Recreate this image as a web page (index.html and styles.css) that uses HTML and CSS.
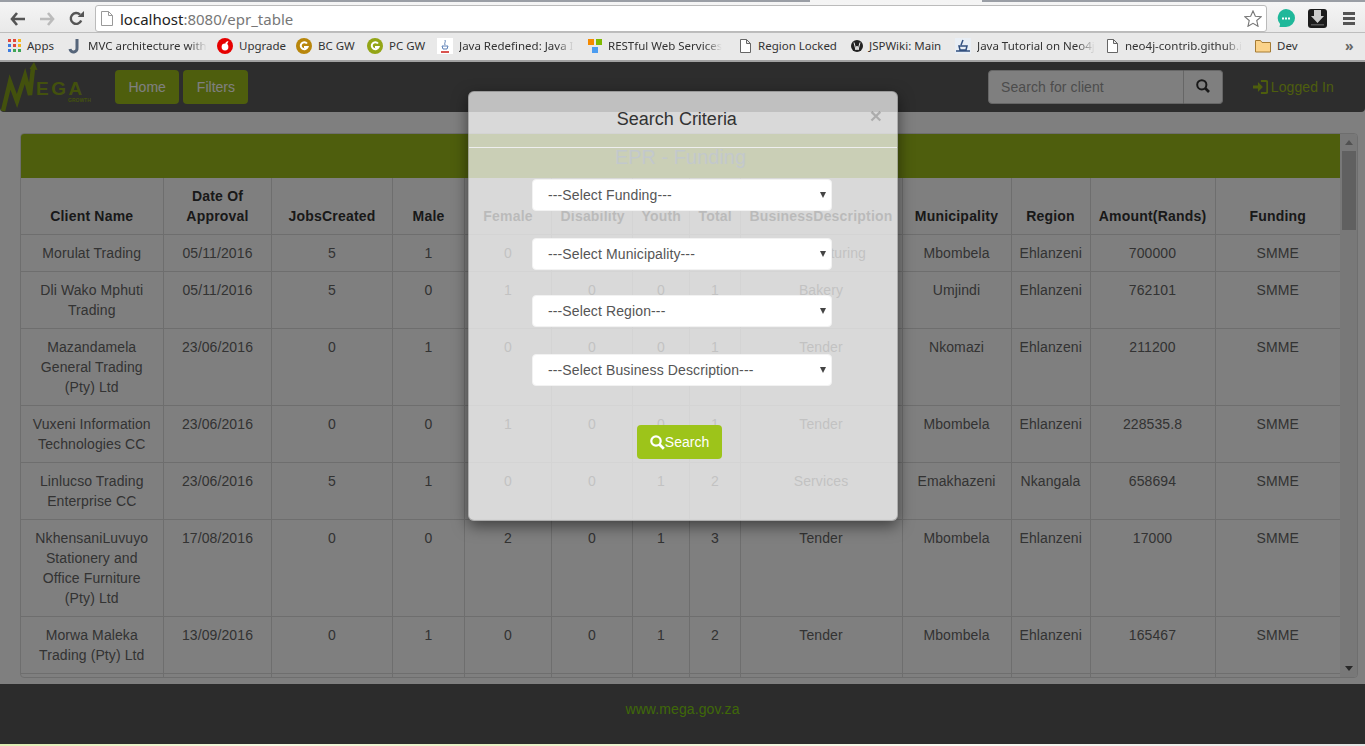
FILE: index.html
```html
<!DOCTYPE html>
<html lang="en">
<head>
    <meta charset="UTF-8">
    <title>EPR Table</title>
    <link rel="stylesheet" href="styles.css">
</head>
<body>
    <!-- browser window top -->
    <div class="tabstrip"><span></span><span class="tabstrip-active"></span><span></span></div>
    <div class="toolbar">
        <svg class="tool-back" width="16" height="14" viewBox="0 0 16 14"><path d="M7 1 2 7l5 6M2.5 7H15" fill="none" stroke="#555" stroke-width="2.6"/></svg>
        <svg class="tool-forward" width="16" height="14" viewBox="0 0 16 14"><path d="M9 1l5 6-5 6M13.5 7H1" fill="none" stroke="#bbb" stroke-width="2.6"/></svg>
        <svg class="tool-reload" width="15" height="15" viewBox="0 0 15 15"><path d="M12.2 9.5A5.4 5.4 0 1 1 11 3.6" fill="none" stroke="#555" stroke-width="2.4"/><path d="M8.6 6H15V0z" fill="#555"/></svg>
        <div class="addressbar">
            <svg width="12" height="15" viewBox="0 0 12 15"><path d="M.5.5h7l4 4v10H.5zM7.5.5v4h4" fill="#fff" stroke="#999"/></svg>
            <span class="url"><span class="url-host">localhost</span>:8080/epr_table</span>
            <svg class="star" width="18" height="17" viewBox="0 0 19 18"><path d="M9.5 1l2.5 5.6 6 .6-4.500 4 1.300 6-5.300-3.100-5.300 3.100 1.300-6L1 7.200l6-.6z" fill="#fff" stroke="#777" stroke-width="1.200"/></svg>
        </div>
        <svg class="tool-chat" width="18" height="19" viewBox="0 0 18 19"><path d="M9 0a9 9 0 0 1 0 18H2.500l.6-3A9 9 0 0 1 9 0z" fill="#1fb89a"/><path d="M5 8.500h2v2H5zM8 8.500h2v2H8zM11 8.500h2v2h-2z" fill="#fff"/></svg>
        <svg class="tool-save" width="19" height="19" viewBox="0 0 19 19"><rect width="19" height="19" rx="3" fill="#1c1c1c"/><path d="M6 1h7v6h3l-6.500 7L3 7h3z" fill="#ccc"/><path d="M3 15h13v1.500H3z" fill="#555"/></svg>
        <div class="tool-menu"><span></span><span></span><span></span></div>
    </div>
    <div class="bookmarks">
        <div class="bm">
            <svg width="13" height="13" viewBox="0 0 13 13"><path d="M0 0h3v3H0z" fill="#e0483c"/><path d="M5 0h3v3H5z" fill="#e0483c"/><path d="M10 0h3v3h-3z" fill="#f3b51c"/><path d="M0 5h3v3H0z" fill="#3d7de0"/><path d="M5 5h3v3H5z" fill="#e0483c"/><path d="M10 5h3v3h-3z" fill="#f3b51c"/><path d="M0 10h3v3H0z" fill="#3d7de0"/><path d="M5 10h3v3H5z" fill="#3fa557"/><path d="M10 10h3v3h-3z" fill="#3fa557"/></svg>
            <span>Apps</span>
        </div>
        <div class="bm">
            <svg width="14" height="16" viewBox="0 0 14 16"><path d="M9 1v9a3.500 3.500 0 0 1-7 1" fill="none" stroke="#56657a" stroke-width="3"/></svg>
            <span class="bm-fade">MVC architecture with</span>
        </div>
        <div class="bm">
            <svg width="16" height="16" viewBox="0 0 16 16"><circle cx="8" cy="8" r="8" fill="#e60000"/><circle cx="8" cy="9" r="3.400" fill="#fff"/><path d="M8 5.500c1-2 2.500-2.500 3.500-2.300-.5 1-1 2-1.500 3z" fill="#fff"/></svg>
            <span>Upgrade</span>
        </div>
        <div class="bm">
            <svg width="16" height="16" viewBox="0 0 16 16"><circle cx="8" cy="8" r="8" fill="#b8860b"/><path d="M11 5.500A3.500 3.500 0 1 0 11.500 9H8" fill="none" stroke="#fff" stroke-width="2"/></svg>
            <span>BC GW</span>
        </div>
        <div class="bm">
            <svg width="16" height="16" viewBox="0 0 16 16"><circle cx="8" cy="8" r="8" fill="#93a516"/><path d="M11 5.500A3.500 3.500 0 1 0 11.500 9H8" fill="none" stroke="#fff" stroke-width="2"/></svg>
            <span>PC GW</span>
        </div>
        <div class="bm">
            <svg width="16" height="16" viewBox="0 0 16 16"><path d="M0 0h16v16H0z" fill="#fff"/><path d="M8 2c1 2-1 3 0 5M5 8h6l-1 3H6z" fill="none" stroke="#5a7fb5"/><path d="M4 13h8v2H4z" fill="#d9534f"/></svg>
            <span class="bm-fade">Java Redefined: Java I</span>
        </div>
        <div class="bm">
            <svg width="14" height="14" viewBox="0 0 14 14"><path d="M0 0h6v6H0z" fill="#f58a00"/><path d="M8 0h6v6H8z" fill="#7fba00"/><path d="M4 8h6v6H4z" fill="#4b9cf0"/></svg>
            <span class="bm-fade">RESTful Web Services</span>
        </div>
        <div class="bm bm-doc">
            <svg width="11" height="14" viewBox="0 0 11 14"><path d="M.5.500h6l4 4v9H.5zM6.500.500v4h4" fill="#fff" stroke="#666"/></svg>
            <span>Region Locked</span>
        </div>
        <div class="bm">
            <svg width="12" height="12" viewBox="0 0 12 12"><circle cx="6" cy="6" r="6" fill="#222"/><path d="M3 2.500 5 10l1-4 1 4 2-7.500" fill="none" stroke="#eee"/></svg>
            <span>JSPWiki: Main</span>
        </div>
        <div class="bm">
            <svg width="16" height="16" viewBox="0 0 16 16"><path d="M0 0h16v16H0z" fill="#e8eef5"/><path d="M4 8h8l-1 4H5zM8 2 6 7M1 13h14" fill="none" stroke="#32507f" stroke-width="1.500"/></svg>
            <span class="bm-fade">Java Tutorial on Neo4j</span>
        </div>
        <div class="bm bm-doc">
            <svg width="11" height="14" viewBox="0 0 11 14"><path d="M.5.500h6l4 4v9H.5zM6.500.500v4h4" fill="#fff" stroke="#666"/></svg>
            <span class="bm-fade">neo4j-contrib.github.i</span>
        </div>
        <div class="bm">
            <svg width="16" height="14" viewBox="0 0 16 14"><path d="M.5 13V1.500h5l1.500 2h8.500V13z" fill="#fbd38a" stroke="#a67c35"/></svg>
            <span>Dev</span>
        </div>
        <div class="bm-more">»</div>
    </div>

    <div class="page">
        <nav class="navbar">
            <svg class="logo" width="115" height="50" viewBox="0 0 115 50">
                <path d="M3 49 10 20l7 19 8-25 5 19 3-27" fill="none" stroke="#87a31a" stroke-width="4.500"/>
                <path d="M29.500 7 34 0l3.500 8z" fill="#87a31a"/>
                <text class="logo-name" x="36" y="33">EGA</text>
                <text class="logo-small" x="68" y="40">GROWTH</text>
            </svg>
            <a class="btn btn-green">Home</a>
            <a class="btn btn-green">Filters</a>
            <form class="client-search">
                <input type="text" placeholder="Search for client">
                <button type="button">
                    <svg width="14" height="14" viewBox="0 0 14 14"><circle cx="5.800" cy="5.800" r="4.600" fill="none" stroke="#333" stroke-width="2"/><path d="M9 9l4 4" stroke="#333" stroke-width="2.600"/></svg>
                </button>
            </form>
            <a class="login">
                <svg width="15" height="14" viewBox="0 0 15 14"><path d="M0 5.500h5V2l5 5-5 5V8.500H0z" fill="#9cbc1a"/><path d="M8 1h5a1.500 1.500 0 0 1 1.500 1.500v9A1.500 1.500 0 0 1 13 13H8" fill="none" stroke="#9cbc1a" stroke-width="2"/></svg>Logged In
            </a>
        </nav>

        <main class="content">
            <div class="panel">
                <div class="panel-main">
                    <h3 class="panel-heading">EPR - Funding</h3>
                    <table>
                        <colgroup>
                            <col class="w142"><col class="w108"><col class="w121"><col class="w72"><col class="w87"><col class="w81"><col class="w57"><col class="w51"><col class="w162"><col class="w109"><col class="w79"><col class="w125"><col class="w125">
                        </colgroup>
                        <thead>
                            <tr>
                                <th>Client Name</th><th>Date Of Approval</th><th>JobsCreated</th><th>Male</th><th>Female</th><th>Disability</th><th>Youth</th><th>Total</th><th>BusinessDescription</th><th>Municipality</th><th>Region</th><th>Amount(Rands)</th><th>Funding</th>
                            </tr>
                        </thead>
                        <tbody>
                            <tr><td>Morulat Trading</td><td>05/11/2016</td><td>5</td><td>1</td><td>0</td><td>0</td><td>0</td><td>1</td><td>Manufacturing</td><td>Mbombela</td><td>Ehlanzeni</td><td>700000</td><td>SMME</td></tr>
                            <tr><td>Dli Wako Mphuti Trading</td><td>05/11/2016</td><td>5</td><td>0</td><td>1</td><td>0</td><td>0</td><td>1</td><td>Bakery</td><td>Umjindi</td><td>Ehlanzeni</td><td>762101</td><td>SMME</td></tr>
                            <tr><td>Mazandamela General Trading (Pty) Ltd</td><td>23/06/2016</td><td>0</td><td>1</td><td>0</td><td>0</td><td>0</td><td>1</td><td>Tender</td><td>Nkomazi</td><td>Ehlanzeni</td><td>211200</td><td>SMME</td></tr>
                            <tr><td>Vuxeni Information Technologies CC</td><td>23/06/2016</td><td>0</td><td>0</td><td>1</td><td>0</td><td>0</td><td>1</td><td>Tender</td><td>Mbombela</td><td>Ehlanzeni</td><td>228535.8</td><td>SMME</td></tr>
                            <tr><td>Linlucso Trading Enterprise CC</td><td>23/06/2016</td><td>5</td><td>1</td><td>0</td><td>0</td><td>1</td><td>2</td><td>Services</td><td>Emakhazeni</td><td>Nkangala</td><td>658694</td><td>SMME</td></tr>
                            <tr><td>NkhensaniLuvuyo Stationery and<br>Office Furniture (Pty) Ltd</td><td>17/08/2016</td><td>0</td><td>0</td><td>2</td><td>0</td><td>1</td><td>3</td><td>Tender</td><td>Mbombela</td><td>Ehlanzeni</td><td>17000</td><td>SMME</td></tr>
                            <tr><td>Morwa Maleka Trading (Pty) Ltd</td><td>13/09/2016</td><td>0</td><td>1</td><td>0</td><td>0</td><td>1</td><td>2</td><td>Tender</td><td>Mbombela</td><td>Ehlanzeni</td><td>165467</td><td>SMME</td></tr>
                            <tr><td>&nbsp;</td><td></td><td></td><td></td><td></td><td></td><td></td><td></td><td></td><td></td><td></td><td></td><td></td></tr>
                        </tbody>
                    </table>
                </div>
                <div class="scrollbar">
                    <span class="arrow-up"></span>
                    <span class="thumb"></span>
                    <span class="arrow-down"></span>
                </div>
            </div>
        </main>

        <footer class="footer">www.mega.gov.za</footer>

        <div class="backdrop"></div>
        <div class="modal">
            <div class="modal-header">
                <h4>Search Criteria</h4>
                <span class="close">&times;</span>
            </div>
            <form class="modal-body">
                <div class="select-wrap first"><select><option>---Select Funding---</option></select></div>
                <div class="select-wrap"><select><option>---Select Municipality---</option></select></div>
                <div class="select-wrap"><select><option>---Select Region---</option></select></div>
                <div class="select-wrap"><select><option>---Select Business Description---</option></select></div>
                <button type="button" class="btn btn-search">
                    <svg width="15" height="15" viewBox="0 0 15 15"><circle cx="6" cy="6" r="4.700" fill="none" stroke="#fff" stroke-width="2.200"/><path d="M9.500 9.500l4.300 4.300" stroke="#fff" stroke-width="2.800"/></svg>Search
                </button>
            </form>
        </div>
    </div>
    <div class="bottom-strip"></div>
</body>
</html>
```

FILE: styles.css
```css
* {
    box-sizing: border-box;
}
body {
    margin: 0;
    height: 746px;
    overflow: hidden;
    display: flex;
    flex-direction: column;
    font-family: "Liberation Sans", Arial, sans-serif;
    font-size: 14px;
    line-height: 20px;
    color: #666;
    background: #fff;
}

/* browser window */
.tabstrip {
    height: 2px;
    display: grid;
    grid-template-columns: 810px 172px 1fr;
    background: #9a9ea5;
}
.tabstrip-active {
    background: #f4f4f4;
}
.toolbar {
    height: 31px;
    padding-top: 3px;
    display: flex;
    align-items: center;
    background: linear-gradient(#f5f5f5, #e9e9e9);
    border-bottom: 1px solid #bdbdbd;
}
.tool-back {
    margin-left: 10px;
}
.tool-forward {
    margin-left: 13px;
}
.tool-reload {
    margin-left: 14px;
}
.addressbar {
    width: 1172px;
    height: 27px;
    margin-left: 11px;
    padding: 0 4px 0 5px;
    display: flex;
    align-items: center;
    background: #fff;
    border: 1px solid #bbb;
    border-radius: 3px;
}
.url {
    margin-left: 7px;
    flex: 1;
    font-family: "Noto Sans", sans-serif;
    font-size: 15px;
    color: #777;
}
.url-host {
    color: #222;
}
.tool-chat {
    margin-left: 10px;
}
.tool-save {
    margin-left: 13px;
}
.tool-menu {
    width: 12px;
    margin-left: 16px;
    display: flex;
    flex-direction: column;
    gap: 2px;
}
.tool-menu span {
    height: 3px;
    background: #555;
}
.bookmarks {
    height: 29px;
    padding: 0 0 2px 8px;
    display: grid;
    grid-template-columns: 60px 149px 79px 71px 70px 151px 152px 111px 104px 152px 148px 90px 1fr;
    align-items: center;
    font-family: "Noto Sans", sans-serif;
    font-size: 11.500px;
    color: #333;
    background: #e9e9e9;
    border-bottom: 2px solid #a2a2a2;
}
.bm {
    display: flex;
    align-items: center;
    gap: 6px;
    white-space: nowrap;
}
.bm-doc {
    gap: 7px;
}
.bm-fade {
    mask-image: linear-gradient(to right, #000 85%, transparent);
}
.bm-more {
    font-size: 14px;
    font-weight: bold;
    color: #666;
}

/* page */
.page {
    position: relative;
    height: 682px;
    display: flex;
    flex-direction: column;
}
.navbar {
    height: 50px;
    flex: none;
    padding-right: 31px;
    display: flex;
    align-items: center;
    gap: 4px;
    background: #5a5a5a;
    border-radius: 0 0 4px 4px;
}
.logo {
    flex: none;
    margin-right: -4px;
}
.logo-name {
    font-size: 19px;
    font-weight: bold;
    letter-spacing: 2.500px;
    fill: #87a31a;
}
.logo-small {
    font-size: 5px;
    font-weight: bold;
    fill: #87a31a;
}
.btn {
    height: 34px;
    padding: 6px 13.500px;
    border: 0;
    border-radius: 4px;
    font-family: inherit;
    font-size: 14px;
    line-height: 22px;
    color: #fff;
}
.btn-green {
    background: #9cbc1a;
}
.client-search {
    width: 235px;
    height: 34px;
    margin-left: auto;
    display: flex;
}
.client-search input {
    width: 196px;
    padding: 6px 12px;
    font-family: inherit;
    font-size: 14px;
    letter-spacing: .1px;
    background: #fff;
    border: 1px solid #ccc;
    border-radius: 4px 0 0 4px;
}
.client-search input::placeholder {
    color: #999;
}
.client-search button {
    flex: 1;
    padding: 0;
    background: #fff;
    border: 1px solid #ccc;
    border-left: 0;
    border-radius: 0 4px 4px 0;
}
.login {
    width: 81px;
    margin-left: 26px;
    display: flex;
    align-items: center;
    gap: 3px;
    white-space: nowrap;
    letter-spacing: .1px;
    color: #9cbc1a;
}
.content {
    flex: 1;
    min-height: 0;
    padding: 21px 7px 6px 20px;
}
.panel {
    height: 100%;
    display: flex;
    overflow: hidden;
    border: 1px solid #ddd;
    border-radius: 4px;
}
.panel-main {
    width: 1319px;
    overflow: hidden;
}
.panel-heading {
    height: 44px;
    margin: 0;
    padding-top: 12px;
    text-align: center;
    font-size: 20px;
    font-weight: normal;
    line-height: 22px;
    color: #6a8fa8;
    background: #9cbc1a;
}
table {
    width: 1319px;
    table-layout: fixed;
    border-collapse: collapse;
}
.w142 { width: 142px; }
.w108 { width: 108px; }
.w121 { width: 121px; }
.w72 { width: 72px; }
.w87 { width: 87px; }
.w81 { width: 81px; }
.w57 { width: 57px; }
.w51 { width: 51px; }
.w162 { width: 162px; }
.w109 { width: 109px; }
.w79 { width: 79px; }
.w125 { width: 125px; }
th,
td {
    height: 37px;
    padding: 8px;
    text-align: center;
    vertical-align: top;
    letter-spacing: .1px;
    border: 1px solid #ddd;
    border-top: 0;
}
th:first-child,
td:first-child {
    border-left: 0;
}
th:last-child,
td:last-child {
    border-right: 0;
}
th:nth-child(n+2):nth-child(-n+8),
td:nth-child(n+2):nth-child(-n+8) {
    padding-left: 9px;
}
th {
    vertical-align: bottom;
    color: #333;
    letter-spacing: .2px;
}
.scrollbar {
    flex: 1;
    display: flex;
    flex-direction: column;
    align-items: center;
    background: #f1f1f1;
}
.arrow-up {
    margin-top: 6px;
    border: 4px solid transparent;
    border-top: 0;
    border-bottom: 5px solid #a3a3a3;
}
.thumb {
    width: 14px;
    height: 79px;
    margin-top: 6px;
    background: #c1c1c1;
}
.arrow-down {
    margin-top: auto;
    margin-bottom: 6px;
    border: 4px solid transparent;
    border-bottom: 0;
    border-top: 5px solid #505050;
}
.footer {
    height: 60px;
    flex: none;
    padding-top: 15px;
    text-align: center;
    letter-spacing: .1px;
    color: #7fd010;
    background: #585858;
}
.bottom-strip {
    height: 2px;
    background: linear-gradient(to right, #dfeeb4, #f4f8e2 20%, #e6f1c4 35%, #f8f8f0 70%, #e4e4e4);
}

/* search dialog */
.backdrop {
    position: absolute;
    inset: 0;
    background: rgba(0, 0, 0, .5);
}
.modal {
    position: absolute;
    top: 29px;
    left: 468px;
    width: 430px;
    height: 430px;
    color: #333;
    background: rgba(255, 255, 255, .7);
    border: 1px solid rgba(0, 0, 0, .2);
    border-radius: 6px;
    box-shadow: 0 5px 15px rgba(0, 0, 0, .5);
}
.modal-header {
    height: 56px;
    padding: 15px;
    display: flex;
    border-bottom: 1px solid #eee;
}
.modal-header h4 {
    flex: 1;
    margin: 0;
    text-align: center;
    font-size: 18px;
    font-weight: normal;
    line-height: 25px;
}
.close {
    font-size: 21px;
    font-weight: bold;
    line-height: 18px;
    color: #000;
    opacity: .2;
}
.modal-body {
    padding-left: 63px;
    display: flex;
    flex-direction: column;
    align-items: flex-start;
}
.select-wrap {
    position: relative;
    width: 300px;
    margin-top: 27px;
}
.select-wrap.first {
    margin-top: 31px;
}
.select-wrap:nth-child(3) {
    margin-top: 25px;
}
.select-wrap::after {
    content: "";
    position: absolute;
    top: 13px;
    right: 6px;
    border: 3.500px solid transparent;
    border-bottom: 0;
    border-top: 6px solid #444;
}
.select-wrap select {
    width: 100%;
    height: 32px;
    padding: 0 15px;
    appearance: none;
    font-family: inherit;
    font-size: 14px;
    letter-spacing: .12px;
    color: #555;
    background: #fff;
    border: 1px solid #f2f2f2;
    border-radius: 4px;
}
.btn-search {
    width: 85px;
    margin: 39px 0 0 105px;
    padding: 6px 0;
    display: flex;
    align-items: center;
    justify-content: center;
    background: #9dc41a;
}
```
